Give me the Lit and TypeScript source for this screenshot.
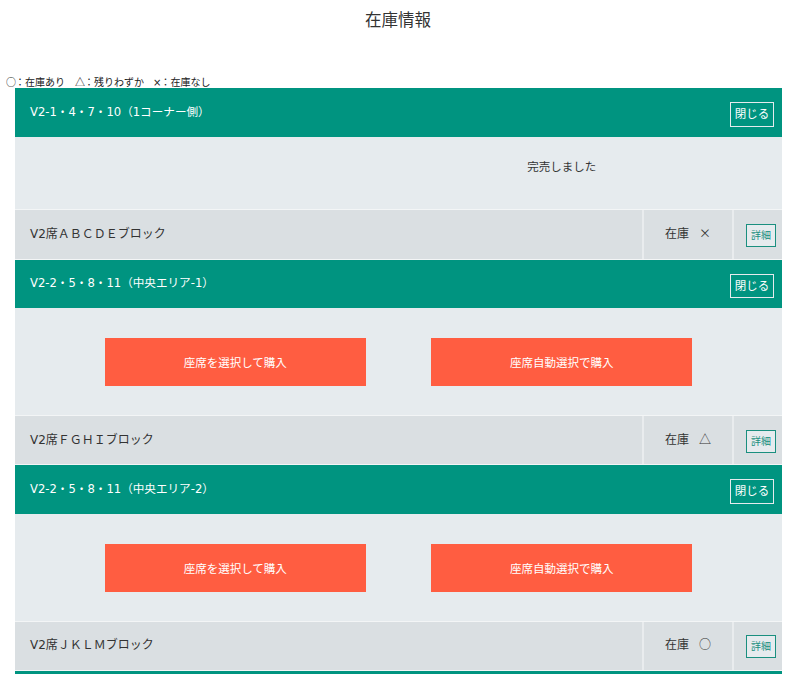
import { LitElement, html, css } from "lit";
import { customElement } from "lit/decorators.js";

type Section = { head: string; sold: boolean; block: string; mark: string };

const sections: Section[] = [
  { head: "V2-1・4・7・10（1コーナー側）", sold: true, block: "V2席ＡＢＣＤＥブロック", mark: "×" },
  { head: "V2-2・5・8・11（中央エリア-1）", sold: false, block: "V2席ＦＧＨＩブロック", mark: "△" },
  { head: "V2-2・5・8・11（中央エリア-2）", sold: false, block: "V2席ＪＫＬＭブロック", mark: "○" },
];

@customElement("app-root")
export class AppRoot extends LitElement {
  static styles = css`
    :host {
      display: block;
      width: 800px;
      height: 674px;
      overflow: hidden;
      background: #fff;
      color: #333;
      font-family: "DejaVu Sans", "Noto Sans CJK JP", sans-serif;
      font-size: 12px;
    }
    h1 {
      margin: 0;
      padding: 8px 4px 0 0;
      height: 66px;
      box-sizing: border-box;
      text-align: center;
      font-size: 16.5px;
      line-height: 22px;
      font-weight: 400;
      font-family: "Noto Sans CJK JP", sans-serif;
    }
    .legend {
      height: 22px;
      padding: 9px 0 0 6px;
      box-sizing: border-box;
      font-size: 10px;
      line-height: 14px;
      color: #222;
      white-space: pre;
    }
    .sym {
      font-family: "Noto Sans CJK JP", sans-serif;
    }
    .legend .sym {
      margin-right: -1px;
    }
    .legend .cross {
      margin: 0 -1px;
    }
    .list {
      margin-left: 15px;
      width: 767px;
    }
    .head {
      height: 48.6px;
      background: #009480;
      color: #fff;
      display: flex;
      align-items: center;
      justify-content: space-between;
      padding: 0 8px 0 15px;
      box-sizing: border-box;
    }
    .head-title {
      margin-top: -3px;
      font-size: 11.6px;
    }
    .close {
      width: 44px;
      height: 24.5px;
      margin-top: 4px;
      box-sizing: border-box;
      border: 1px solid #e6ebee;
      color: #fff;
      text-align: center;
      font-size: 11.5px;
      line-height: 22px;
    }
    .body {
      background: #e6ebee;
      display: grid;
      grid-template-columns: 326.5px 326.5px;
      justify-content: center;
      align-items: center;
      border-bottom: 1px solid #f3f5f6;
      box-sizing: border-box;
    }
    .body.sold {
      height: 73.6px;
      padding-bottom: 13px;
    }
    .body.open {
      height: 107.8px;
      padding-top: 1px;
    }
    .soldout {
      grid-column: 2;
      text-align: center;
      font-size: 11.5px;
    }
    .buy {
      justify-self: center;
      width: 261px;
      height: 48px;
      background: #ff5d41;
      color: #fff;
      display: flex;
      align-items: center;
      justify-content: center;
      font-size: 11.5px;
    }
    .row {
      height: 49.4px;
      background: #dadfe2;
      display: flex;
      border-bottom: 1px solid #f3f5f6;
      box-sizing: border-box;
    }
    .name {
      flex: 1;
      padding: 0 0 4px 15px;
      display: flex;
      align-items: center;
      font-size: 12px;
    }
    .stock {
      width: 88px;
      border-left: 2px solid #e9ecee;
      display: flex;
      align-items: center;
      justify-content: center;
      gap: 10px;
      padding-bottom: 4px;
      font-size: 12px;
    }
    .mark {
      width: 12px;
      text-align: center;
    }
    .act {
      width: 42px;
      border-left: 2px solid #e9ecee;
      display: flex;
      align-items: center;
      justify-content: flex-end;
      padding: 2px 6px 0 0;
    }
    .detail {
      width: 30px;
      height: 23px;
      box-sizing: border-box;
      border: 1px solid #1a8f7f;
      background: #e6ebee;
      color: #1a8f7f;
      text-align: center;
      font-size: 10px;
      line-height: 21px;
    }
    .tail {
      height: 8px;
      background: #009480;
    }
  `;

  render() {
    return html`
      <h1>在庫情報</h1>
      <div class="legend"><span class="sym">○</span>：在庫あり　<span class="sym">△</span>：残りわずか　<span class="cross">×</span>：在庫なし</div>
      <div class="list">
        ${sections.map(
          (s) => html`
            <div class="head">
              <span class="head-title">${s.head}</span>
              <span class="close">閉じる</span>
            </div>
            ${s.sold
              ? html`<div class="body sold"><div class="soldout">完売しました</div></div>`
              : html`<div class="body open">
                  <div class="buy">座席を選択して購入</div>
                  <div class="buy">座席自動選択で購入</div>
                </div>`}
            <div class="row">
              <div class="name">${s.block}</div>
              <div class="stock"><span>在庫</span><span class="mark sym">${s.mark}</span></div>
              <div class="act"><span class="detail">詳細</span></div>
            </div>
          `
        )}
        <div class="tail"></div>
      </div>
    `;
  }
}
